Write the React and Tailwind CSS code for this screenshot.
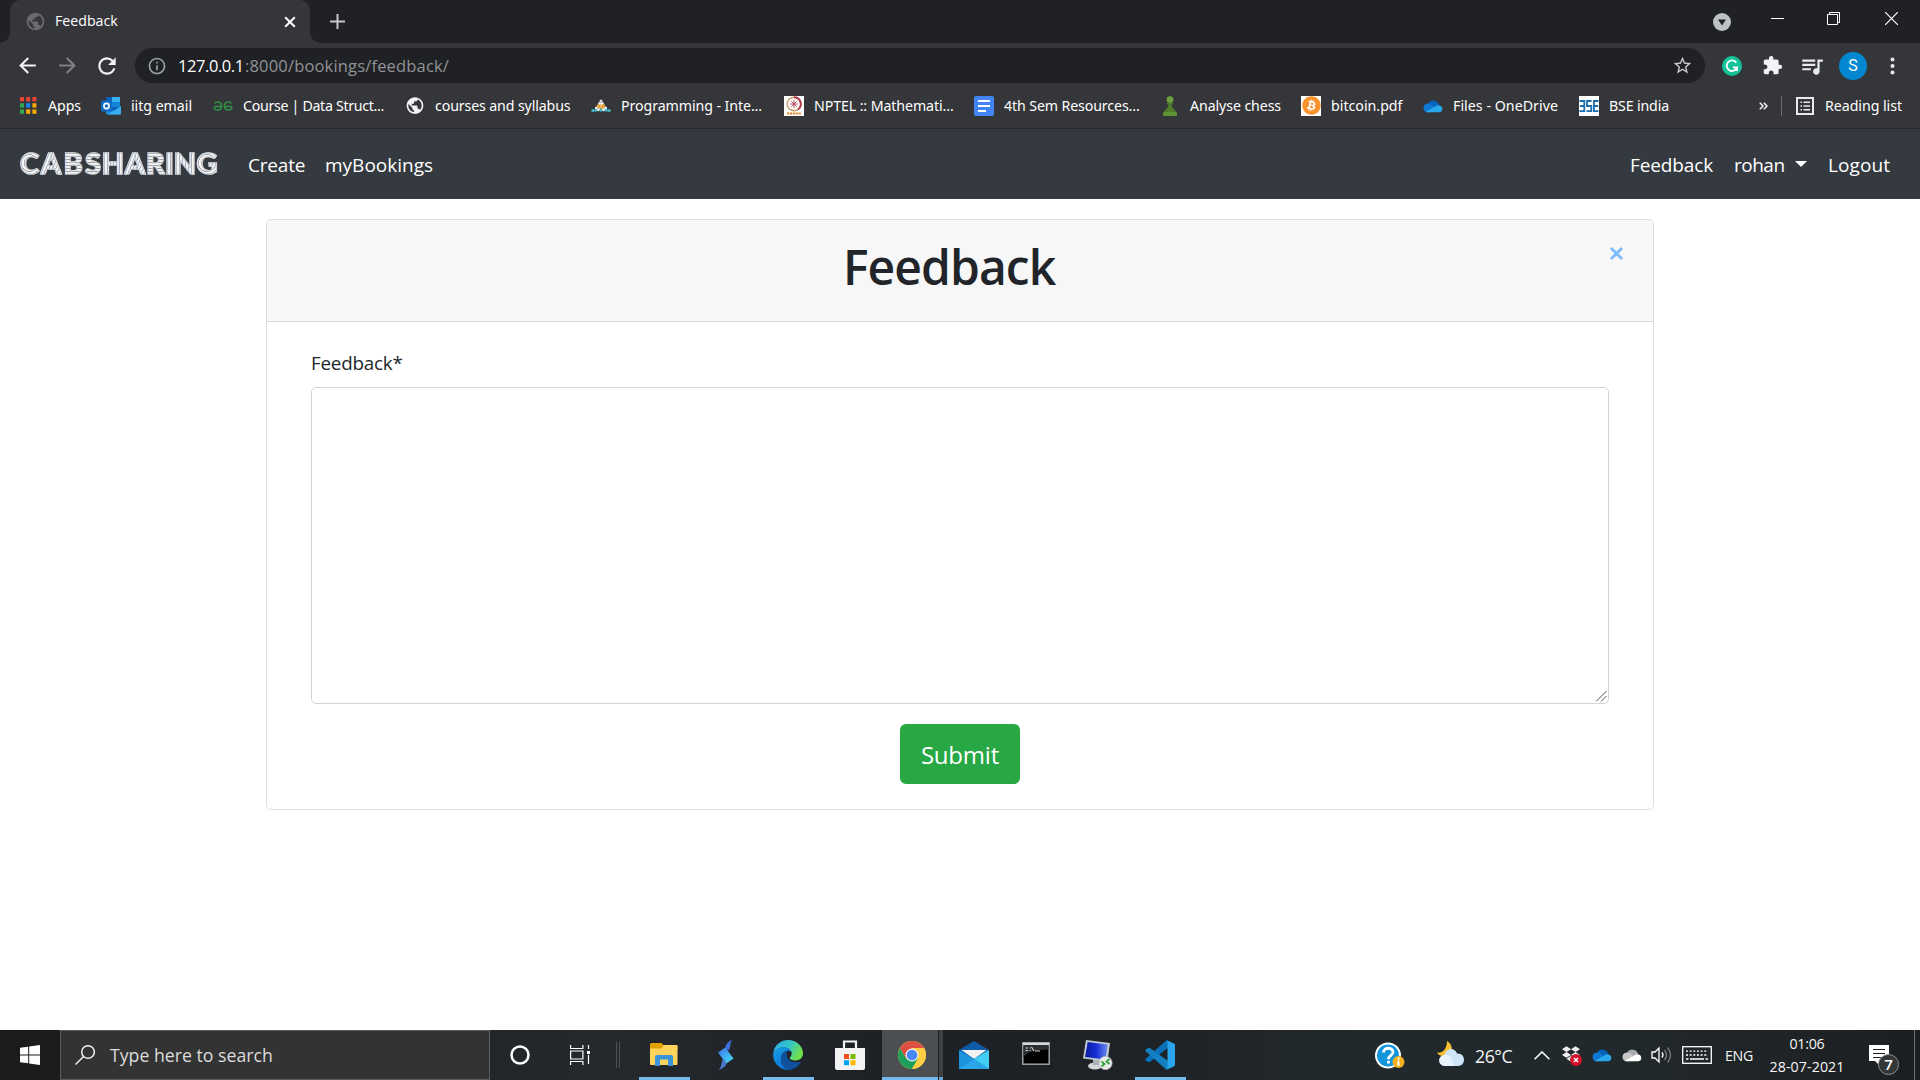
import React from "react";
import {
  MdArrowBack,
  MdArrowForward,
  MdExtension,
  MdInfoOutline,
  MdPublic,
  MdQueueMusic,
  MdRefresh,
  MdStarBorder,
} from "react-icons/md";
import { FaBitcoin, FaDropbox } from "react-icons/fa";

/* ---------- bookmark icons ---------- */

const APP_COLORS = ["#ea4335", "#ea4335", "#ea4335", "#34a853", "#1a86f0", "#f9ab00", "#34a853", "#f9ab00", "#f9ab00"];

function AppsIcon() {
  return (
    <svg width="20" height="20" viewBox="0 0 20 20">
      {APP_COLORS.map((c, i) => (
        <rect key={i} x={2 + (i % 3) * 6.2} y={1 + Math.floor(i / 3) * 6.2} width="4" height="4.4" fill={c} />
      ))}
    </svg>
  );
}

function OutlookIcon() {
  return (
    <svg width="20" height="20" viewBox="0 0 20 20">
      <rect x="5" y="1" width="14" height="14" rx="1" fill="#0a5fb8" />
      <rect x="11" y="1" width="8" height="5" fill="#35b0f0" />
      <rect x="11" y="6" width="8" height="5" fill="#1484d8" />
      <path d="M5 10l8 5 7-5v7a1.500 1.500 0 0 1-1.500 1.500H6.500A1.500 1.500 0 0 1 5 17z" fill="#1e90e0" />
      <path d="M20 10v7a1.500 1.500 0 0 1-1.500 1.500H7z" fill="#36aef0" />
      <rect x="0" y="4.500" width="11" height="11" rx="1" fill="#0f6cc4" />
      <circle cx="5.500" cy="10" r="2.600" fill="none" stroke="#fff" strokeWidth="1.600" />
    </svg>
  );
}

function GeeksIcon() {
  return (
    <svg width="20" height="20" viewBox="0 0 20 20" fill="none" stroke="#2f8d46" strokeWidth="1.600">
      <path d="M1 10.500h8.300M1.500 7.500C3 5.300 8.600 5 8.600 10c0 5.200-7.400 5.200-7.600.5" />
      <path d="M19 10.500h-8.300M18.500 7.500C17 5.300 11.400 5 11.400 10c0 5.200 7.400 5.200 7.600.5" />
    </svg>
  );
}

const PYRAMID = [
  [10, 5, "#dcdcdc"],
  [8.600, 7.400, "#f3f3f3"], [11.400, 7.400, "#f3f3f3"],
  [7.200, 9.800, "#f5a623"], [10, 9.800, "#f7c06a"], [12.800, 9.800, "#f5a623"],
  [5.400, 12, "#f3f3f3"], [8.500, 12, "#f5b04a"], [11.500, 12, "#f5b04a"], [14.600, 12, "#f3f3f3"],
  [1.800, 14.600, "#41b7c9"], [4.600, 14.200, "#41b7c9"], [7.400, 13.800, "#d7f0f4"], [10, 14.200, "#41b7c9"], [12.600, 13.800, "#d7f0f4"], [15.400, 14.200, "#41b7c9"], [18.200, 14.600, "#41b7c9"],
];

function PyramidIcon() {
  return (
    <svg width="20" height="20" viewBox="0 0 20 20">
      {PYRAMID.map(([x, y, c], i) => (
        <circle key={i} cx={x} cy={y} r="1.500" fill={c} />
      ))}
    </svg>
  );
}

function NptelIcon() {
  return (
    <svg width="20" height="20" viewBox="0 0 20 20">
      <rect width="20" height="20" fill="#fff" />
      <circle cx="10" cy="8" r="6.800" fill="none" stroke="#c9a06a" strokeWidth="1.500" />
      <path d="M10 1.200A6.800 6.800 0 0 1 14 13.500" fill="none" stroke="#b03a4a" strokeWidth="2" />
      <path d="M10 4v8M6 8h8M7.200 5.200l5.600 5.600M12.800 5.200l-5.600 5.600" stroke="#b5535c" strokeWidth="1" />
      <path d="M3 17.500h14" stroke="#e08a2c" strokeWidth="2.200" strokeDasharray="2.200 .7" />
    </svg>
  );
}

function DocsIcon() {
  return (
    <svg width="20" height="20" viewBox="0 0 20 20">
      <rect width="20" height="20" rx="1.800" fill="#4285f4" />
      <path d="M4 5h12M4 10h12M4 15h8" stroke="#fff" strokeWidth="2" />
    </svg>
  );
}

function PawnIcon() {
  return (
    <svg width="20" height="20" viewBox="0 0 20 20">
      <circle cx="10" cy="3.600" r="3.400" fill="#6fa03f" />
      <path d="M6 7h8l-2.500 2c0 3.500 5.500 5 5.500 11H3c0-6 5.500-7.500 5.500-11z" fill="#4f7d2c" />
      <path d="M3.500 16c-.5 1.500-.5 3-.5 4h14c0-1 0-2.500-.5-4z" fill="#5f9434" />
    </svg>
  );
}

function BitcoinIcon() {
  return (
    <span className="flex size-5 items-center justify-center bg-white text-[#f7932a]">
      <FaBitcoin size={19} />
    </span>
  );
}

function CloudIcon({ back = "#0364b8", mid = "#0f78d4", front = "#28a8ea" }) {
  return (
    <svg width="20" height="20" viewBox="0 0 20 20">
      <path d="M5 8a6 6 0 0 1 11.300 1.500L9 13z" fill={back} />
      <path d="M4.500 16.200A4.300 4.300 0 0 1 4 7.700c2.500-.5 4 .5 6.500 2.300L13 16z" fill={mid} />
      <path d="M3 15.700L13 10c1-.8 2.300-.9 3.200-.6A3.500 3.500 0 0 1 16.500 16.300H4.500c-.6 0-1.100-.2-1.500-.6z" fill={front} />
    </svg>
  );
}

function BseIcon() {
  return (
    <svg width="20" height="20" viewBox="0 0 20 20">
      <rect width="20" height="20" fill="#fff" />
      <g fill="none" stroke="#1b6fb0" strokeWidth="1.800">
        <path d="M.5 5h4.800v10.200H.5M1 10h4.500" />
        <path d="M12.600 5H8v5h4.300v5.200H7.500" />
        <path d="M19.500 5h-4.600v10.200h4.600M14.900 10h4.300" />
      </g>
    </svg>
  );
}

const BOOKMARKS = [
  { icon: <AppsIcon />, text: "Apps", cls: "w-[83px]", tr: "tracking-[-0.08px]" },
  { icon: <OutlookIcon />, text: "iitg email", cls: "w-[112px]", tr: "tracking-[-0.04px]" },
  { icon: <GeeksIcon />, text: "Course | Data Struct...", cls: "w-[192px]", tr: "tracking-[-0.31px]" },
  { icon: <MdPublic size={21} color="#f1f3f4" />, text: "courses and syllabus", cls: "w-[186px]", tr: "tracking-[-0.13px]" },
  { icon: <PyramidIcon />, text: "Programming - Inte...", cls: "w-[193px]", tr: "tracking-[-0.08px]" },
  { icon: <NptelIcon />, text: "NPTEL :: Mathemati...", cls: "w-[190px]", tr: "tracking-[-0.1px]" },
  { icon: <DocsIcon />, text: "4th Sem Resources...", cls: "w-[186px]", tr: "tracking-[-0.12px]" },
  { icon: <PawnIcon />, text: "Analyse chess", cls: "w-[141px]", tr: "tracking-[-0.1px]" },
  { icon: <BitcoinIcon />, text: "bitcoin.pdf", cls: "w-[122px]", tr: "" },
  { icon: <CloudIcon />, text: "Files - OneDrive", cls: "w-[156px]", tr: "tracking-[0.04px]" },
  { icon: <BseIcon />, text: "BSE india", cls: "w-[100px]", tr: "tracking-[-0.15px]" },
];

/* ---------- browser chrome ---------- */

function TabStrip() {
  return (
    <div className="flex h-[43px] bg-[#202124] pl-[10px]">
      <div className="relative flex w-[300px] items-center rounded-t-[10px] bg-[#35363a] pl-[15px] pr-[14px]">
        <span className="absolute -left-[10px] bottom-0 size-[10px] bg-[radial-gradient(circle_at_0_0,#202124_9.500px,#35363a_10px)]" />
        <span className="absolute -right-[10px] bottom-0 size-[10px] bg-[radial-gradient(circle_at_100%_0,#202124_9.500px,#35363a_10px)]" />
        <MdPublic size={21} color="#696b6f" />
        <span className="ml-[9px] flex-1 pb-px text-[14.200px] text-white">Feedback</span>
        <svg width="12" height="12" viewBox="0 0 12 12" stroke="#fff" strokeWidth="2">
          <path d="M1.200 1.200l9.600 9.600M10.800 1.200L1.200 10.800" />
        </svg>
      </div>
      <div className="flex flex-1 items-center">
        <svg className="ml-[20px]" width="15" height="15" viewBox="0 0 15 15" stroke="#c6c8cb" strokeWidth="2">
          <path d="M7.500 0v15M0 7.500h15" />
        </svg>
      </div>
      <div className="flex h-[37px] items-center pr-[22px]">
        <svg className="mr-[40px] mt-[7px]" width="18" height="18" viewBox="0 0 18 18">
          <circle cx="9" cy="9" r="9" fill="#bdc1c6" />
          <path d="M5 6.500h8l-4 6z" fill="#202124" />
        </svg>
        <svg width="13" height="13" viewBox="0 0 13 13" stroke="#fff">
          <path d="M0 6.500h13" />
        </svg>
        <svg className="ml-[43px]" width="13" height="13" viewBox="0 0 13 13" fill="none" stroke="#fff">
          <path d="M.5 2.500h10v10H.5zM2.500 2.500v-2h10v10h-2" />
        </svg>
        <svg className="ml-[45px]" width="13" height="13" viewBox="0 0 13 13" stroke="#fff" strokeWidth="1.200">
          <path d="M0 0l13 13M13 0L0 13" />
        </svg>
      </div>
    </div>
  );
}

function AddressBar() {
  return (
    <div className="flex h-[45px] items-center pl-[15px] pr-[20px]">
      <MdArrowBack size={25} color="#f1f3f4" />
      <MdArrowForward className="ml-[15px]" size={25} color="#7f8083" />
      <MdRefresh className="ml-[14px] mr-px" size={26} color="#f1f3f4" />
      <div className="ml-[14px] flex h-[35px] w-[1570px] items-center rounded-full bg-[#202124] pl-[12px] pr-[12px]">
        <MdInfoOutline size={20} color="#9aa0a6" />
        <span className="ml-[11px] w-[67px] pt-px text-[16.500px] tracking-[-0.430px] text-white">127.0.0.1</span>
        <span className="flex-1 pt-px text-[16.500px] tracking-[0.170px] text-[#909398]">:8000/bookings/feedback/</span>
        <MdStarBorder size={21} color="#c8cacd" />
      </div>
      <svg className="ml-[17px]" width="20" height="20" viewBox="0 0 20 20">
        <circle cx="10" cy="10" r="10" fill="#15c39a" />
        <path d="M14.300 6.600A5.300 5.300 0 1 0 15 11.500h-4M15 11v4" fill="none" stroke="#fff" strokeWidth="1.900" />
      </svg>
      <MdExtension className="ml-[20px]" size={21} color="#f1f3f4" />
      <MdQueueMusic className="ml-[16px]" size={26} color="#e8eaed" />
      <span className="ml-[14px] flex size-7 items-center justify-center rounded-full bg-[#0288d1] font-[Roboto,sans-serif] text-[16px] text-white">
        S
      </span>
      <svg className="ml-[23px]" width="5" height="18" viewBox="0 0 5 18" fill="#e8eaed">
        <circle cx="2.500" cy="2.500" r="2" />
        <circle cx="2.500" cy="9" r="2" />
        <circle cx="2.500" cy="15.500" r="2" />
      </svg>
    </div>
  );
}

function BookmarksBar() {
  return (
    <div className="flex h-[41px] items-center border-b border-[#29292b] pb-[4px] pl-[18px] font-['Noto_Sans',sans-serif] text-[14.200px] text-white">
      {BOOKMARKS.map((b) => (
        <div key={b.text} className={`flex shrink-0 items-center gap-[10px] whitespace-nowrap ${b.cls}`}>
          <span className="flex w-5 shrink-0 justify-center">{b.icon}</span>
          <span className={b.tr}>{b.text}</span>
        </div>
      ))}
      <svg className="ml-[80px]" width="9" height="8" viewBox="0 0 9 8" fill="none" stroke="#f1f3f4" strokeWidth="1.500">
        <path d="M.8 .8L4 4 .8 7.200M4.800 .8L8 4 4.800 7.200" />
      </svg>
      <span className="ml-[13px] h-5 w-px bg-[#6a6b6e]" />
      <svg className="ml-[14px]" width="18" height="18" viewBox="0 0 18 18" fill="none" stroke="#e8eaed" strokeWidth="2">
        <rect x="1" y="1" width="16" height="16" />
        <path d="M4.500 5.200h1.500M7.500 5.200h6.500M4.500 9h1.500M7.500 9h6.500M4.500 12.800h1.500M7.500 12.800h6.500" strokeWidth="1.600" />
      </svg>
      <span className="ml-[11px] whitespace-nowrap tracking-[-0.050px]">Reading list</span>
    </div>
  );
}

/* ---------- page ---------- */

const ROUND = "bg-[repeating-radial-gradient(circle_at_50%_50%,#f6f6f7_0_2px,#a9adb3_2px_3px)]";
const VERT = "bg-[repeating-linear-gradient(90deg,#f3f5f8_0_2px,#a6b0bc_2px_3px)]";
const HORZ = "bg-[repeating-linear-gradient(180deg,#f6f6f7_0_2px,#989da4_2px_3px)]";
const DIAG = "bg-[repeating-linear-gradient(112deg,#f3f5f8_0_2px,#a9b4c0_2px_3px)]";

const LETTERS = [
  ["C", "w-[21px]", ROUND],
  ["A", "w-[22px]", DIAG],
  ["B", "w-[22px]", HORZ],
  ["S", "w-[18px]", HORZ],
  ["H", "w-[22px]", VERT],
  ["A", "w-[22px]", DIAG],
  ["R", "w-[19px]", HORZ],
  ["I", "w-[9px]", VERT],
  ["N", "w-[22px]", VERT],
  ["G", "w-[22px]", ROUND],
];

function Brand() {
  return (
    <div className="-mt-[5px] flex w-[199px] font-[Lato,sans-serif] text-[29px] font-black leading-[36px]">
      {LETTERS.map(([ch, w, fill], i) => (
        <span key={i} className={`flex justify-center bg-clip-text text-transparent [-webkit-text-stroke:1.500px_#c6cad0a6] ${w} ${fill}`}>
          {ch}
        </span>
      ))}
    </div>
  );
}

function Navbar() {
  return (
    <nav className="flex h-[70px] items-center bg-[#343a40] pl-[19px] pt-[2px] text-[19px] text-white">
      <Brand />
      <span className="ml-[30px] w-[77px] tracking-[-0.2px]">Create</span>
      <span className="flex-1">myBookings</span>
      <span className="w-[104px] tracking-[-0.130px]">Feedback</span>
      <span className="w-[61px] tracking-[-0.5px]">rohan</span>
      <svg className="-mt-[2px] w-[33px]" width="33" height="7" viewBox="0 0 33 7" fill="#fff">
        <path d="M0 0h12L6 6z" />
      </svg>
      <span className="w-[92px] tracking-[0.080px]">Logout</span>
    </nav>
  );
}

function FeedbackCard() {
  return (
    <section className="mt-[20px] ml-[266px] h-[591px] w-[1388px] overflow-hidden rounded-[5px] border border-[#dfdfdf] bg-white">
      <header className="flex h-[102px] items-start border-b border-[#d8d8d8] bg-[#f7f7f7]">
        <h1 className="ml-[576px] mt-[17px] w-[764px] text-[48px] font-semibold leading-[60px] tracking-[-0.950px] text-[#212529]">
          Feedback
        </h1>
        <svg className="mt-[27px] ml-[3px]" width="13" height="13" viewBox="0 0 13 13" stroke="#7bbbfb" strokeWidth="2.800">
          <path d="M1 1l11 11M12 1L1 12" />
        </svg>
      </header>
      <form className="flex flex-col px-[44px]" onSubmit={(e) => e.preventDefault()}>
        <label className="mt-[26px] h-[39px] text-[18.800px] leading-[30px] tracking-[-0.2px] text-[#212529]">Feedback*</label>
        <div className="relative h-[317px] w-[1298px]">
          <textarea className="block size-full resize-none rounded-[5px] border border-[#ced4da] outline-none" />
          <svg className="absolute bottom-[2px] right-[2px]" width="11" height="11" viewBox="0 0 11 11" stroke="#555" strokeWidth="1">
            <path d="M0 10.500L10.500 0M5 10.500L10.500 5" />
          </svg>
        </div>
        <button className="mt-[20px] ml-[589px] h-[60px] w-[120px] rounded-[6px] bg-[#28a745] pt-[2px] text-[24px] tracking-[-0.2px] text-white">
          Submit
        </button>
      </form>
    </section>
  );
}

/* ---------- taskbar ---------- */

function ExplorerIcon() {
  return (
    <svg width="30" height="30" viewBox="0 0 30 30">
      <path d="M1 4.500A1.500 1.500 0 0 1 2.500 3h10l2 2H27a1.500 1.500 0 0 1 1.500 1.500V10H1z" fill="#e0a000" />
      <path d="M1 8.500h11.500l2.500-3.500H27.500A1 1 0 0 1 28.500 6v18a1 1 0 0 1-1 1H2a1 1 0 0 1-1-1z" fill="#ffd35c" />
      <path d="M6 26V17a2 2 0 0 1 2-2h14a2 2 0 0 1 2 2v9h-5v-6.500h-8V26z" fill="#3b94d9" />
    </svg>
  );
}

function LightningIcon() {
  return (
    <svg width="30" height="30" viewBox="0 0 30 30">
      <defs>
        <linearGradient id="bolt" x1="0" y1="0" x2="1" y2="1">
          <stop offset="0" stopColor="#3f6cf0" />
          <stop offset="1" stopColor="#44e6f0" />
        </linearGradient>
      </defs>
      <path d="M21 0C17.500 1.500 14.500 4 14.300 8.500l3.200 1.700C20 7.500 18.500 4 21 0z" fill="#3c6fe0" />
      <path d="M7 12.500L14.300 7.500 22.500 18.500 15.300 23.500z" fill="url(#bolt)" />
      <path d="M8 30c3.500-1.500 7.300-3.500 7.300-6.500L11.800 19C10.500 22.500 10.500 26.500 8 30z" fill="#4a78c8" />
    </svg>
  );
}

function EdgeIcon() {
  return (
    <svg width="30" height="30" viewBox="0 0 30 30">
      <defs>
        <linearGradient id="edgeTop" x1="0" y1="0" x2="1" y2=".4">
          <stop offset="0" stopColor="#2aa8e0" />
          <stop offset=".55" stopColor="#33c6cc" />
          <stop offset="1" stopColor="#6ee04a" />
        </linearGradient>
        <linearGradient id="edgeLeft" x1="0" y1="0" x2=".6" y2="1">
          <stop offset="0" stopColor="#1aa0e8" />
          <stop offset="1" stopColor="#0b6fd0" />
        </linearGradient>
      </defs>
      <path d="M.3 13C1.200 5.500 7.300 0 15 0c8.500 0 15 6.200 15 13.500 0 4-3 7-7.500 7-3.500 0-5.800-1.200-5.800-2.500 0-1.200 2-1.800 2-4.500 0-3.200-3.200-6-8-6C6 7.500 2.500 9.500.3 13z" fill="url(#edgeTop)" />
      <path d="M.1 14.500C1 10 5 7.300 10.500 7.300c4.500 0 7.500 2.200 8.100 5-1-1-2.300-1.500-3.600-1.500-4 0-7 4-7 8.500 0 5.500 4 9.500 9 10.500A15 15 0 0 1 .1 14.500z" fill="url(#edgeLeft)" />
      <path d="M8 19c0-3.500 2.500-7.500 6.500-8.500-.8 2-1 4-.3 6.500 1.300 4 5.800 6.300 12.800 4.700.8-.2 1 .2.6.8A15 15 0 0 1 17 29.900C11.500 29 8 24.500 8 19z" fill="#10519c" />
    </svg>
  );
}

function StoreIcon() {
  return (
    <svg width="30" height="30" viewBox="0 0 30 30">
      <path d="M9 9V1.500h12V9" fill="none" stroke="#f3f3f3" strokeWidth="2.200" />
      <path d="M0 8h30v20a2 2 0 0 1-2 2H2a2 2 0 0 1-2-2z" fill="#f3f3f3" />
      <path d="M9 14h5v5H9z" fill="#f25022" />
      <path d="M15.500 14h5v5h-5z" fill="#7fba00" />
      <path d="M9 20.200h5v5H9z" fill="#00a4ef" />
      <path d="M15.500 20.200h5v5h-5z" fill="#ffb900" />
    </svg>
  );
}

function ChromeIcon() {
  return (
    <svg width="28" height="28" viewBox="0 0 28 28">
      <circle cx="14" cy="14" r="14" fill="#ffcd42" />
      <path d="M1.900 7A14 14 0 0 1 26.100 7H14L8 17.500z" fill="#dd4f43" />
      <path d="M1.900 7A14 14 0 0 0 14 28l6-10.500L8 17.500z" fill="#1b9e5a" />
      <path d="M14 28l6.060-10.500A7 7 0 0 0 20 10.500L18 7h8.100A14 14 0 0 1 14 28z" fill="#ffcd42" />
      <circle cx="14" cy="14" r="6.500" fill="#f3f3f3" />
      <circle cx="14" cy="14" r="5.300" fill="#4688f1" />
    </svg>
  );
}

function MailIcon() {
  return (
    <svg width="30" height="30" viewBox="0 0 30 30">
      <path d="M0 10L15 1l15 9-8 8H8z" fill="#0f5ba8" />
      <path d="M2.500 10h25L15 19z" fill="#f2f2f2" />
      <path d="M0 10l15 9 15-9v19H0z" fill="#1c93dd" />
      <path d="M30 10v19L15 19z" fill="#43cdf5" />
      <path d="M0 29l15-10 15 10z" fill="#2aa6e8" />
    </svg>
  );
}

function TerminalIcon() {
  return (
    <svg className="-mt-[2px]" width="28" height="24" viewBox="0 0 28 24">
      <rect x=".8" y=".8" width="26.400" height="21.400" fill="#000" stroke="#9da2a6" strokeWidth="1.500" />
      <path d="M1 2h26" stroke="#d7dadd" strokeWidth="2.400" />
      <path d="M1.600 3.500h24.800v4C16 8 6 9 1.600 15z" fill="#2c2f32" />
      <path d="M3.500 6h2.500M3.500 8.500h2.500M8 5.500v1M8 8v1M9.500 5l2.500 4M13 9h5" stroke="#d5d8da" strokeWidth="1.100" />
    </svg>
  );
}

function RemoteIcon() {
  return (
    <svg width="30" height="30" viewBox="0 0 30 30">
      <defs>
        <linearGradient id="screen" x1="0" y1="0" x2="1" y2="0">
          <stop offset="0" stopColor="#0a1a9c" />
          <stop offset=".5" stopColor="#1630d6" />
          <stop offset="1" stopColor="#6d8cf2" />
        </linearGradient>
      </defs>
      <ellipse cx="12" cy="26" rx="7" ry="3.500" fill="#d2d6da" />
      <path d="M10 19h6v6h-6z" fill="#a9afb5" />
      <path d="M3 0l24 3-2.500 18.500L0 18.500z" fill="#c3c9d2" />
      <path d="M4.700 2l20 2.500-2.200 15L2 17z" fill="url(#screen)" />
      <circle cx="22.500" cy="23" r="6.600" fill="#e9ebec" stroke="#b9bdc0" strokeWidth=".8" />
      <path d="M18.500 21.500l3 2.500-3 2.500M26.500 19l-3 2.500 3 2.500" fill="none" stroke="#2f9e2f" strokeWidth="1.700" />
    </svg>
  );
}

function CodeIcon() {
  return (
    <svg width="30" height="30" viewBox="0 0 30 30">
      <path d="M21.500 0.200L30 4v5.500l-8-1L4.200 22.600 0.500 20.500 0.400 19z" fill="#0a70b8" />
      <path d="M4.200 7.400L.5 9.500.4 11l21 18.800 4-3.800L24 21.800z" fill="#1480c4" />
      <path d="M21.500 .2L28.800 3.600A2 2 0 0 1 30 5.400v19.200a2 2 0 0 1-1.200 1.800L21.500 29.800c.6-.5 1-1.200 1-2V2.200c0-.8-.4-1.500-1-2z" fill="#2aa5ee" />
    </svg>
  );
}

const PINS = [
  { name: "explorer", icon: <ExplorerIcon />, open: true },
  { name: "lightning", icon: <LightningIcon /> },
  { name: "edge", icon: <EdgeIcon />, open: true },
  { name: "store", icon: <StoreIcon /> },
  { name: "chrome", icon: <ChromeIcon />, active: true },
  { name: "mail", icon: <MailIcon /> },
  { name: "terminal", icon: <TerminalIcon /> },
  { name: "remote", icon: <RemoteIcon /> },
  { name: "code", icon: <CodeIcon />, open: true },
];

function Pin({ icon, open, active }) {
  if (active) {
    return (
      <div className="flex h-full w-[62px] pl-px">
        <div className="flex w-[56px] flex-col items-center border-b-[3px] border-[#76b9ed] bg-[#4b4f52] pt-[11px] pl-[4px]">{icon}</div>
        <div className="ml-px w-[4px] border-b-[3px] border-[#6aa5d4] bg-[#3c4043]" />
      </div>
    );
  }
  return (
    <div className="flex h-full w-[62px] flex-col items-center justify-between">
      <span className="flex h-[47px] items-center pt-[3px]">{icon}</span>
      {open && <span className="h-[3px] w-[51px] bg-[#76b9ed]" />}
    </div>
  );
}

function Tray() {
  return (
    <div className="flex h-full items-center text-[14.200px] text-[#f5f5f5]">
      <svg className="mt-[2px]" width="30" height="28" viewBox="0 0 30 28">
        <circle cx="13" cy="13.500" r="13" fill="#fff" />
        <circle cx="13" cy="13.500" r="11" fill="#1296db" />
        <path d="M8.500 10.500c0-5.800 9.500-5.500 9.500-.3 0 3.300-4.500 3.300-4.500 7M13.500 18.800v2.700" fill="none" stroke="#fff" strokeWidth="2.800" />
        <circle cx="23.500" cy="20" r="6" fill="#f5b01d" />
        <path d="M23.500 15.800v1.800M23.500 18.800v5" stroke="#fff" strokeWidth="2" />
      </svg>
      <svg className="-mt-[3px] ml-[31px] mr-px" width="30" height="26" viewBox="0 0 30 26">
        <path d="M11 0c6 3 7 12-1 14.500C6 16 2 14 1 11.500c5 1 10-3 10-11.500z" fill="#fbc02d" />
        <path d="M9 25a5.500 5.500 0 0 1-.5-11c1-4.500 4-6 6.500-6s5 1.500 6 4.500c4-.5 7 2.500 7 6.300 0 3.500-2.500 6.200-6 6.200z" fill="#cfe5f8" />
        <path d="M9 25a5.500 5.500 0 0 1-.5-11c5-1.500 9 3 9 11z" fill="#e6f2fc" />
      </svg>
      <span className="ml-[8px] w-[59px] pt-[2px] text-[17.700px] tracking-[-0.450px]">26°C</span>
      <svg width="16" height="9" viewBox="0 0 16 9" fill="none" stroke="#fff" strokeWidth="1.500">
        <path d="M.6 8.300L8 .9l7.400 7.400" />
      </svg>
      <div className="relative ml-[12px] h-[20px] w-[20px]">
        <FaDropbox size={18} color="#f0f0f0" />
        <svg className="absolute left-[8px] top-[9px]" width="12" height="12" viewBox="0 0 12 12">
          <circle cx="6" cy="6" r="6" fill="#d40f2c" />
          <path d="M4 4l4 4M8 4L4 8" stroke="#fff" strokeWidth="1.500" />
        </svg>
      </div>
      <span className="ml-[10px] -mt-px">
        <CloudIcon />
      </span>
      <span className="ml-[10px] -mt-px">
        <CloudIcon back="#a9a9a9" mid="#c9c9c9" front="#ffffff" />
      </span>
      <svg className="ml-[9px]" width="21" height="18" viewBox="0 0 21 18" fill="none" stroke="#fff" strokeWidth="1.300">
        <path d="M1 6h3l4-4v14l-4-4H1z" />
        <path d="M11 6.500q2 2.500 0 5" />
        <path d="M13.500 4q4 5 0 10M16.500 1.500q6 7.500 0 15" stroke="#7a7f82" />
      </svg>
      <svg className="ml-[10px]" width="30" height="18" viewBox="0 0 30 18" fill="none" stroke="#fff" strokeWidth="1.300">
        <rect x=".7" y=".7" width="28.600" height="16.600" />
        <path d="M4 5.200h22M4 9h22" strokeDasharray="2 1.650" />
        <path d="M4 13h2.500M8 13h14M23.500 13h2.500" />
      </svg>
      <span className="ml-[13px] w-[44px] pt-px tracking-[-0.3px]">ENG</span>
      <div className="flex w-[76px] flex-col items-center pb-px leading-[23px]">
        <span className="tracking-[-0.240px]">01:06</span>
        <span className="whitespace-nowrap tracking-[0.1px]">28-07-2021</span>
      </div>
      <div className="relative ml-[24px] mt-[10px] h-[30px] w-[30px]">
        <svg width="20" height="20" viewBox="0 0 20 20">
          <path d="M0 0h20v16H10v4l-4-4H0z" fill="#fff" />
          <path d="M4 4.500h12M4 8.500h12M4 12.500h8" stroke="#1d2123" strokeWidth="1.200" />
        </svg>
        <span className="absolute left-[9px] top-[9px] flex size-[21px] items-center justify-center rounded-full border border-[#8d8f90] bg-[#343738] text-[15px] leading-none font-semibold text-white">
          7
        </span>
      </div>
      <span className="ml-[15px] mr-[5px] h-full w-px bg-[#6f7273]" />
    </div>
  );
}

function Taskbar() {
  return (
    <footer className="flex h-[50px] shrink-0 items-center bg-[linear-gradient(90deg,#1b1b1b_0,#1b1c1e_60px,#22262a_490px,#25292c_600px,#1d2126_900px,#1e2328_1180px,#22292c_1350px,#22292c_1600px,#1c1f21_1920px)]">
      <div className="flex w-[60px] justify-center">
        <svg width="20" height="20" viewBox="0 0 20 20" fill="#fff">
          <path d="M0 2.800L8.200 1.700v7.700H0zM9.200 1.500L20 0v9.400H9.200zM0 10.500h8.200v7.800L0 17.200zM9.200 10.500H20V20L9.200 18.500z" />
        </svg>
      </div>
      <div className="flex h-[50px] w-[430px] items-center border border-[#5b5b5b] bg-[#333333] pl-[14px]">
        <svg width="20" height="20" viewBox="0 0 20 20" fill="none" stroke="#eee" strokeWidth="1.500">
          <circle cx="13" cy="7" r="6.300" />
          <path d="M8.500 11.500L.5 19.500" />
        </svg>
        <span className="ml-[15px] text-[17.700px] text-[#dcdcdc]">Type here to search</span>
      </div>
      <svg className="ml-[20px]" width="20" height="20" viewBox="0 0 20 20" fill="none" stroke="#fff" strokeWidth="2.500">
        <circle cx="10" cy="10" r="8.500" />
      </svg>
      <svg className="ml-[40px]" width="20" height="20" viewBox="0 0 20 20" fill="none" stroke="#fff" strokeWidth="1.200">
        <path d="M.6 0v3.500h12.300V0M.6 20v-3.500h12.300V20M.6 6h12.300v8H.6zM18.500 0v4M18.500 10v9" />
        <rect x="17" y="6" width="3" height="3" fill="#fff" stroke="none" />
      </svg>
      <span className="ml-[26px] h-[26px] w-px bg-[#4d5154]" />
      <span className="ml-[2px] h-[26px] w-px bg-[#4d5154]" />
      <div className="ml-[13px] flex h-full flex-1">
        {PINS.map((p) => (
          <Pin key={p.name} {...p} />
        ))}
      </div>
      <Tray />
    </footer>
  );
}

export default function App() {
  return (
    <div className="flex h-[1080px] w-[1920px] flex-col overflow-hidden bg-white font-['Open_Sans','Noto_Sans',sans-serif]">
      <div className="bg-[#35363a]">
        <TabStrip />
        <AddressBar />
        <BookmarksBar />
      </div>
      <div className="flex flex-1 flex-col">
        <Navbar />
        <FeedbackCard />
      </div>
      <Taskbar />
    </div>
  );
}
